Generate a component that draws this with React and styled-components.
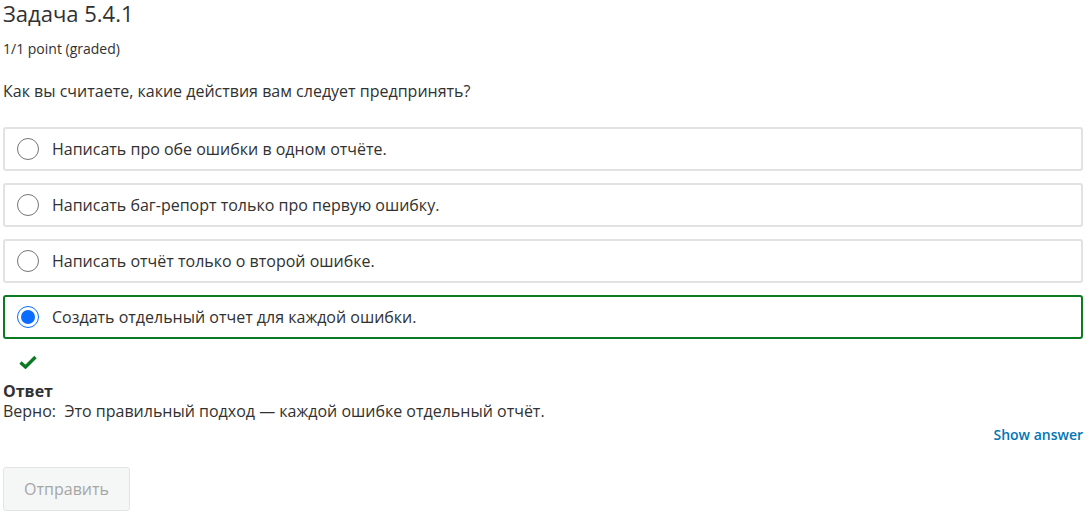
import React from 'react'
import styled, { createGlobalStyle } from 'styled-components'

const GlobalStyle = createGlobalStyle`
  body {
    margin: 0;
    background: #fff;
    font-family: "Open Sans", "Liberation Sans", sans-serif;
    color: #313131;
  }
`

const Page = styled.div`
  padding: 0 4px 0 3px;
`

const Title = styled.h3`
  margin: 0;
  font-size: 22px;
  font-weight: 400;
  line-height: 26px;
  color: #313131;
`

const Points = styled.div`
  margin-top: 13px;
  font-size: 14px;
  line-height: 20px;
`

const Question = styled.p`
  margin: 21px 0 0;
  font-size: 16px;
  line-height: 22px;
`

const Choices = styled.div`
  margin-top: 25px;
  display: flex;
  flex-direction: column;
  gap: 12px;
`

const Choice = styled.label`
  display: flex;
  align-items: center;
  gap: 13px;
  height: 44px;
  box-sizing: border-box;
  padding: 0 12px;
  border: 2px solid ${p => (p.$correct ? '#0b7a22' : '#e2e2e2')};
  border-radius: 3px;
  font-size: 16px;
  color: #313131;
`

const Radio = styled.span`
  width: 22px;
  height: 22px;
  box-sizing: border-box;
  border-radius: 50%;
  border: ${p => (p.$checked ? '1.5px solid #0a6cff' : '1px solid #767676')};
  flex: none;
  display: flex;
  align-items: center;
  justify-content: center;

  &::after {
    content: '';
    display: ${p => (p.$checked ? 'block' : 'none')};
    width: 14px;
    height: 14px;
    border-radius: 50%;
    background: #0a6cff;
  }
`

const Status = styled.div`
  padding: 16px 0 0 16px;
  color: #0b7a22;

  svg {
    display: block;
  }
`

const Answer = styled.div`
  margin-top: 12px;
  font-size: 16px;
  line-height: 20px;
`

const AnswerLabel = styled.div`
  font-weight: 700;
`

const Actions = styled.div`
  display: flex;
  justify-content: flex-end;
  margin-top: 4px;
`

const ShowAnswer = styled.button`
  border: none;
  background: none;
  padding: 0;
  font-family: inherit;
  font-size: 14px;
  font-weight: 600;
  color: #0075b4;
  line-height: 20px;
  cursor: pointer;
`

const Submit = styled.button`
  margin-top: 22px;
  width: 127px;
  height: 44px;
  border: 1px solid #e4e4e4;
  border-radius: 3px;
  background: #f5f6f6;
  font-family: inherit;
  font-size: 16px;
  color: #a6a6a6;
`

const choices = [
  'Написать про обе ошибки в одном отчёте.',
  'Написать баг-репорт только про первую ошибку.',
  'Написать отчёт только о второй ошибке.',
  'Создать отдельный отчет для каждой ошибки.',
]

const CheckIcon = () => (
  <svg width="18" height="14" viewBox="0 0 18 14">
    <path d="M1.5 7.5 L6.5 12 L16.5 2" fill="none" stroke="currentColor" strokeWidth="3.4" />
  </svg>
)

const App = () => (
  <Page>
    <GlobalStyle />
    <Title>Задача 5.4.1</Title>
    <Points>1/1 point (graded)</Points>
    <Question>Как вы считаете, какие действия вам следует предпринять?</Question>
    <Choices>
      {choices.map((text, i) => {
        const picked = i === 3
        return (
          <Choice key={i} $correct={picked}>
            <Radio $checked={picked} />
            {text}
          </Choice>
        )
      })}
    </Choices>
    <Status>
      <CheckIcon />
    </Status>
    <Answer>
      <AnswerLabel>Ответ</AnswerLabel>
      <div>Верно:&nbsp; Это правильный подход — каждой ошибке отдельный отчёт.</div>
    </Answer>
    <Actions>
      <ShowAnswer>Show answer</ShowAnswer>
    </Actions>
    <Submit disabled>Отправить</Submit>
  </Page>
)

export default App
